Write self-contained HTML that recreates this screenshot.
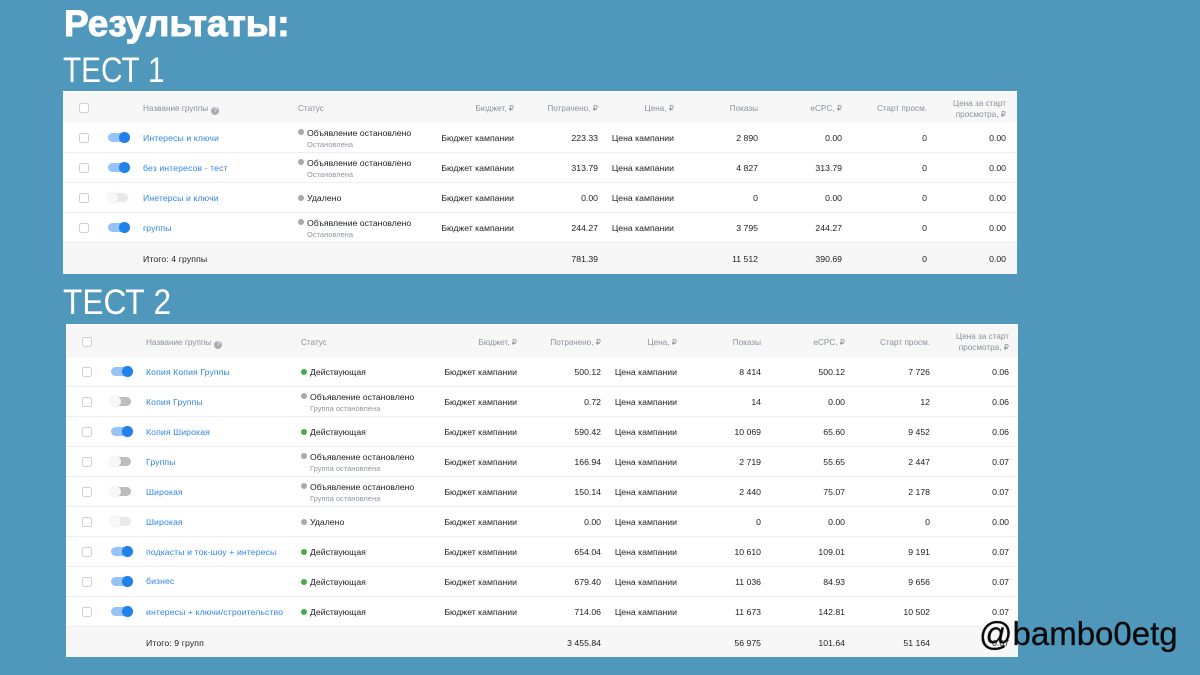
<!DOCTYPE html>
<html lang="ru"><head><meta charset="utf-8"><title>Результаты</title>
<style>
html,body{margin:0;padding:0}
body{width:1200px;height:675px;background:#5098bb;position:relative;overflow:hidden;font-family:"Liberation Sans",sans-serif}
.t{position:absolute;color:#fff;white-space:nowrap}
.tb{position:absolute;background:#fff;overflow:hidden}
.in{position:absolute;left:0;top:0;width:954px;height:100%}
.h,.r,.f{position:absolute;left:0;width:954px;height:30px;line-height:30px;font-size:8.7px;color:#222;white-space:nowrap}
.r{border-bottom:1px solid #eeeeee;box-sizing:content-box;height:29px;line-height:30px}
.h{background:#f7f7f7;color:#8a909b;font-size:8.2px}
.f{background:#f7f7f7}
.h span,.r span,.f span{position:absolute;top:0}
.n{left:80px;color:#2f86e8;letter-spacing:.1px}
.s{left:244px}
.s.u{top:-5.5px!important}
.sub{left:244px;top:6.5px!important;font-size:7.5px;color:#8f96a3}
.dot{left:235px;top:12px!important;width:6px;height:6px;border-radius:50%;background:#a9a9a9}
.dot.u{top:6px!important}
.g{background:#43ad48}
.b{right:503px}.c{right:419px}.p{right:343px}.w{right:259px}.e{right:175px}.o{right:90px}.l{right:11px}
.cb{left:16px;top:9.5px!important;width:8px;height:8px;border:1.2px solid #ccd1da;border-radius:2.5px;background:#fff}
.tr{left:45px;top:10px!important;width:20px;height:9px;border-radius:4.5px}
.k{left:56px;top:9px!important;width:11px;height:11px;border-radius:50%;background:#2181ea;box-shadow:0 0 1px rgba(0,0,0,.2)}
.on{background:#95c3f6}
.off{background:#bdbdbd}
.del{background:#e9e9e9}
.kf{left:44px;top:9px!important;width:11px;height:11px;border-radius:50%;background:#f7f7f7;box-shadow:0 0 1.5px rgba(0,0,0,.15)}
.two{line-height:10.5px;text-align:right;top:7px!important}
.q{display:inline-block;position:relative;top:.5px;width:8px;height:8px;line-height:8px;border-radius:50%;background:#a8adb5;color:#fff;font-size:6px;text-align:center;margin-left:1px;font-style:normal}
.h .n{letter-spacing:0}
</style></head><body>
<div class="t" style="left:64px;top:2px;font-size:37px;line-height:44px;font-weight:bold;-webkit-text-stroke:1px #fff">Результаты:</div>
<div class="t" style="left:63px;top:51px;font-size:35px;line-height:40px;transform:scaleX(.85);transform-origin:0 0">ТЕСТ 1</div>
<div class="t" style="left:63px;top:283px;font-size:35px;line-height:40px;transform:scaleX(.905);transform-origin:0 0">ТЕСТ 2</div>

<div class="tb" style="left:63px;top:91px;width:954px;height:183px"><div class="in">
<div class="h" style="top:1px;height:31px;line-height:33px"><span class="cb" style="top:10.5px!important"></span><span class="n" style="color:#8a909b">Название группы <i class="q">?</i></span><span class="s" style="left:235px">Статус</span><span class="b">Бюджет, ₽</span><span class="c">Потрачено, ₽</span><span class="p">Цена, ₽</span><span class="w">Показы</span><span class="e">eCPC, ₽</span><span class="o">Старт просм.</span><span class="l two">Цена за старт<br>просмотра, ₽</span></div>

<div class="r" style="top:32px"><span class="cb"></span><span class="tr on"></span><span class="k"></span><span class="n">Интересы и ключи</span><span class="dot u"></span><span class="s u">Объявление остановлено</span><span class="sub">Остановлена</span><span class="b">Бюджет кампании</span><span class="c">223.33</span><span class="p">Цена кампании</span><span class="w">2 890</span><span class="e">0.00</span><span class="o">0</span><span class="l">0.00</span></div>
<div class="r" style="top:62px"><span class="cb"></span><span class="tr on"></span><span class="k"></span><span class="n">без интересов - тест</span><span class="dot u"></span><span class="s u">Объявление остановлено</span><span class="sub">Остановлена</span><span class="b">Бюджет кампании</span><span class="c">313.79</span><span class="p">Цена кампании</span><span class="w">4 827</span><span class="e">313.79</span><span class="o">0</span><span class="l">0.00</span></div>
<div class="r" style="top:92px"><span class="cb"></span><span class="tr del"></span><span class="kf"></span><span class="n">Инетерсы и ключи</span><span class="dot"></span><span class="s">Удалено</span><span class="b">Бюджет кампании</span><span class="c">0.00</span><span class="p">Цена кампании</span><span class="w">0</span><span class="e">0.00</span><span class="o">0</span><span class="l">0.00</span></div>
<div class="r" style="top:122px"><span class="cb"></span><span class="tr on"></span><span class="k"></span><span class="n">группы</span><span class="dot u"></span><span class="s u">Объявление остановлено</span><span class="sub">Остановлена</span><span class="b">Бюджет кампании</span><span class="c">244.27</span><span class="p">Цена кампании</span><span class="w">3 795</span><span class="e">244.27</span><span class="o">0</span><span class="l">0.00</span></div>
<div class="f" style="top:152px;height:31px;line-height:32px"><span class="n" style="color:#222">Итого: 4 группы</span><span class="c">781.39</span><span class="w">11 512</span><span class="e">390.69</span><span class="o">0</span><span class="l">0.00</span></div>
</div></div>

<div class="tb" style="left:66px;top:324px;width:952px;height:333px"><div class="in">
<div class="h" style="top:1px;height:32px;line-height:36px"><span class="cb" style="top:12px!important"></span><span class="n" style="color:#8a909b">Название группы <i class="q">?</i></span><span class="s" style="left:235px">Статус</span><span class="b">Бюджет, ₽</span><span class="c">Потрачено, ₽</span><span class="p">Цена, ₽</span><span class="w">Показы</span><span class="e">eCPC, ₽</span><span class="o">Старт просм.</span><span class="l two">Цена за старт<br>просмотра, ₽</span></div>

<div class="r" style="top:33px"><span class="cb"></span><span class="tr on"></span><span class="k"></span><span class="n">Копия Копия Группы</span><span class="dot g"></span><span class="s">Действующая</span><span class="b">Бюджет кампании</span><span class="c">500.12</span><span class="p">Цена кампании</span><span class="w">8 414</span><span class="e">500.12</span><span class="o">7 726</span><span class="l">0.06</span></div>
<div class="r" style="top:63px"><span class="cb"></span><span class="tr off"></span><span class="kf"></span><span class="n">Копия Группы</span><span class="dot u"></span><span class="s u">Объявление остановлено</span><span class="sub">Группа остановлена</span><span class="b">Бюджет кампании</span><span class="c">0.72</span><span class="p">Цена кампании</span><span class="w">14</span><span class="e">0.00</span><span class="o">12</span><span class="l">0.06</span></div>
<div class="r" style="top:93px"><span class="cb"></span><span class="tr on"></span><span class="k"></span><span class="n">Копия Широкая</span><span class="dot g"></span><span class="s">Действующая</span><span class="b">Бюджет кампании</span><span class="c">590.42</span><span class="p">Цена кампании</span><span class="w">10 069</span><span class="e">65.60</span><span class="o">9 452</span><span class="l">0.06</span></div>
<div class="r" style="top:123px"><span class="cb"></span><span class="tr off"></span><span class="kf"></span><span class="n">Группы</span><span class="dot u"></span><span class="s u">Объявление остановлено</span><span class="sub">Группа остановлена</span><span class="b">Бюджет кампании</span><span class="c">166.94</span><span class="p">Цена кампании</span><span class="w">2 719</span><span class="e">55.65</span><span class="o">2 447</span><span class="l">0.07</span></div>
<div class="r" style="top:153px"><span class="cb"></span><span class="tr off"></span><span class="kf"></span><span class="n">Широкая</span><span class="dot u"></span><span class="s u">Объявление остановлено</span><span class="sub">Группа остановлена</span><span class="b">Бюджет кампании</span><span class="c">150.14</span><span class="p">Цена кампании</span><span class="w">2 440</span><span class="e">75.07</span><span class="o">2 178</span><span class="l">0.07</span></div>
<div class="r" style="top:183px"><span class="cb"></span><span class="tr del"></span><span class="kf"></span><span class="n">Широкая</span><span class="dot"></span><span class="s">Удалено</span><span class="b">Бюджет кампании</span><span class="c">0.00</span><span class="p">Цена кампании</span><span class="w">0</span><span class="e">0.00</span><span class="o">0</span><span class="l">0.00</span></div>
<div class="r" style="top:213px"><span class="cb"></span><span class="tr on"></span><span class="k"></span><span class="n">подкасты и ток-шоу + интересы</span><span class="dot g"></span><span class="s">Действующая</span><span class="b">Бюджет кампании</span><span class="c">654.04</span><span class="p">Цена кампании</span><span class="w">10 610</span><span class="e">109.01</span><span class="o">9 191</span><span class="l">0.07</span></div>
<div class="r" style="top:243px"><span class="cb"></span><span class="tr on"></span><span class="k"></span><span class="n" style="top:-1px">бизнес</span><span class="dot g"></span><span class="s">Действующая</span><span class="b">Бюджет кампании</span><span class="c">679.40</span><span class="p">Цена кампании</span><span class="w">11 036</span><span class="e">84.93</span><span class="o">9 656</span><span class="l">0.07</span></div>
<div class="r" style="top:273px"><span class="cb"></span><span class="tr on"></span><span class="k"></span><span class="n">интересы + ключи/строительство</span><span class="dot g"></span><span class="s">Действующая</span><span class="b">Бюджет кампании</span><span class="c">714.06</span><span class="p">Цена кампании</span><span class="w">11 673</span><span class="e">142.81</span><span class="o">10 502</span><span class="l">0.07</span></div>
<div class="f" style="top:303px;line-height:33px"><span class="n" style="color:#222">Итого: 9 групп</span><span class="c">3 455.84</span><span class="w">56 975</span><span class="e">101.64</span><span class="o">51 164</span><span class="l">0.07</span></div>
</div></div>

<div class="t" style="left:979px;top:615px;font-size:33px;line-height:38px;color:#0a0a0a;-webkit-text-stroke:.3px #0a0a0a">@bambo0etg</div>
</body></html>
